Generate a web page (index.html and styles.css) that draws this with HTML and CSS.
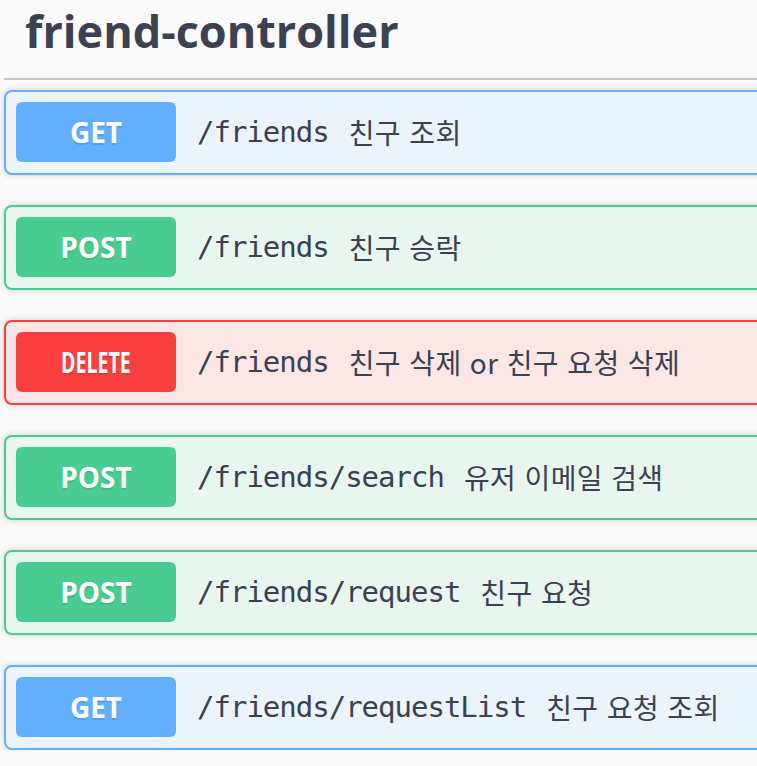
FILE: index.html
```html
<!DOCTYPE html>
<html lang="ko">
<head>
<meta charset="utf-8">
<title>friend-controller</title>
<link rel="stylesheet" href="styles.css">
</head>
<body>
<div class="page">
  <h4 class="tag">friend-controller</h4>
  <div class="ops">
    <div class="op op-get">
      <span class="method">GET</span>
      <span class="path">/friends</span>
      <span class="desc">친구 조회</span>
    </div>
    <div class="op op-post">
      <span class="method">POST</span>
      <span class="path">/friends</span>
      <span class="desc">친구 승락</span>
    </div>
    <div class="op op-delete">
      <span class="method"><span class="narrow">DELETE</span></span>
      <span class="path">/friends</span>
      <span class="desc">친구 삭제 or 친구 요청 삭제</span>
    </div>
    <div class="op op-post">
      <span class="method">POST</span>
      <span class="path">/friends/search</span>
      <span class="desc">유저 이메일 검색</span>
    </div>
    <div class="op op-post">
      <span class="method">POST</span>
      <span class="path">/friends/request</span>
      <span class="desc">친구 요청</span>
    </div>
    <div class="op op-get">
      <span class="method">GET</span>
      <span class="path">/friends/requestList</span>
      <span class="desc">친구 요청 조회</span>
    </div>
  </div>
</div>
</body>
</html>
```

FILE: styles.css
```css
html, body {
  margin: 0;
  padding: 0;
  background: #fafafa;
  overflow: hidden;
}
body {
  font-family: "Open Sans", "Noto Sans CJK KR", sans-serif;
  color: #3b4151;
}
.page {
  width: 1000px;
  padding-left: 4px;
}
.tag {
  margin: 0 0 10px 0;
  padding: 0 20px 17px 21px;
  font-size: 45px;
  line-height: 61px;
  font-weight: 700;
  color: #3b4151;
  border-bottom: 2px solid #c6c8cc;
}
.ops {
  display: flex;
  flex-direction: column;
  gap: 30px;
}
.op {
  display: flex;
  align-items: center;
  padding: 10px 10px 11px 10px;
  border: 2px solid;
  border-radius: 8px;
  box-shadow: 0 0 6px rgba(0, 0, 0, 0.19);
}
.method {
  display: flex;
  align-items: center;
  justify-content: center;
  min-width: 160px;
  height: 60px;
  border-radius: 6px;
  color: #fff;
  font-family: "Open Sans", sans-serif;
  font-weight: 700;
  font-size: 28px;
  text-shadow: 0 2px 0 rgba(0, 0, 0, 0.1);
}
.narrow {
  display: inline-block;
  transform: scaleX(0.7);
}
.path {
  padding: 0 20px 0 21px;
  font-family: "DejaVu Sans Mono", monospace;
  font-size: 29px;
  letter-spacing: -1px;
  color: #3b4151;
}
.desc {
  font-family: "Noto Sans CJK KR", "Open Sans", sans-serif;
  font-size: 28px;
  letter-spacing: 0.4px;
  color: #3b4151;
}
.op-get {
  border-color: #61affe;
  background: #ebf3fb;
}
.op-get .method {
  background: #61affe;
}
.op-post {
  border-color: #49cc90;
  background: #e8f6f0;
}
.op-post .method {
  background: #49cc90;
}
.op-delete {
  border-color: #f93e3e;
  background: #fbe6e6;
}
.op-delete .method {
  background: #f93e3e;
}
```
